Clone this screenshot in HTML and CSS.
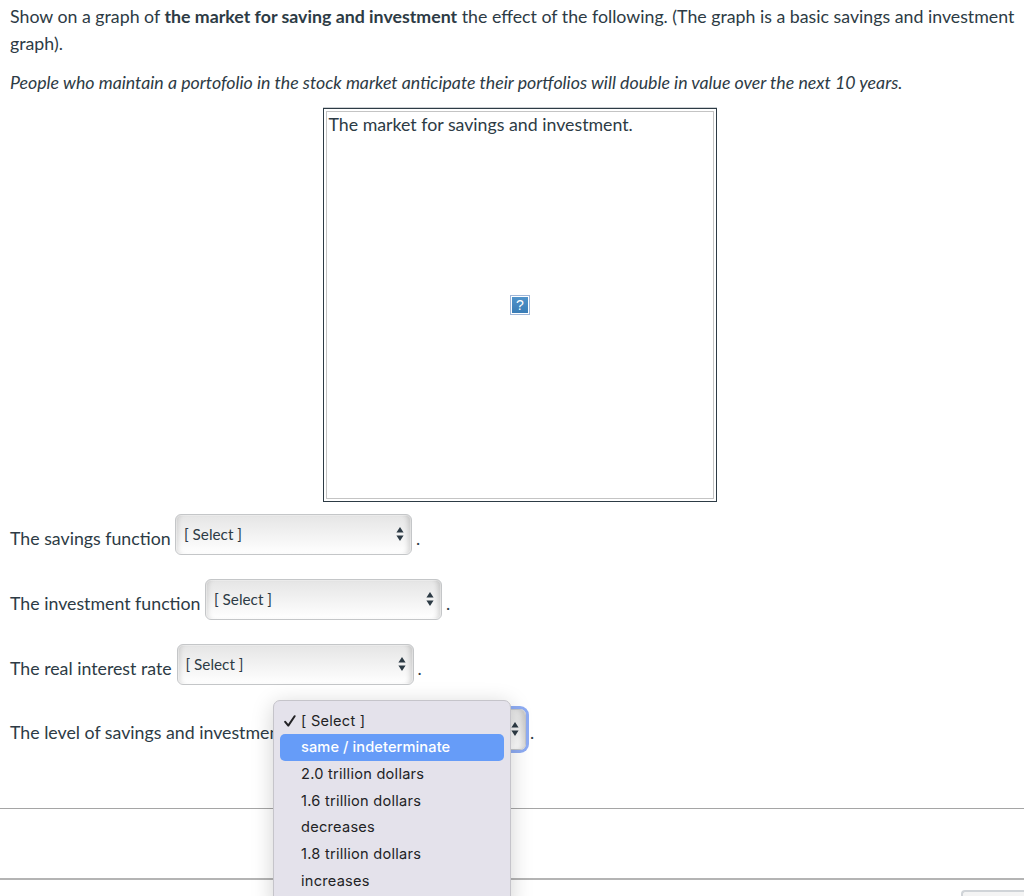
FILE: index.html
```html
<!DOCTYPE html>
<html lang="en">
<head>
	<meta charset="utf-8" />
	<title>Question</title>
	<link rel="stylesheet" href="styles.css">
</head>
<body>
	<div class="question">
		<p class="prompt">Show on a graph of <strong>the market for saving and investment</strong> the effect of the following. (The graph is a basic savings and investment<br/>graph).</p>
		<p class="scenario"><em>People who maintain a portofolio in the stock market anticipate their portfolios will double in value over the next 10 years.</em></p>

		<div class="graph">
			<div class="graph-cell">
				<span class="graph-title">The market for savings and investment.</span>
				<span class="missing">?</span>
			</div>
		</div>

		<div class="row">
			<span class="label savings">The savings function</span>
			<div class="select">[ Select ]<svg class="arrows" viewBox="0 0 8 14"><path d="M4 0L7.6 5.6H.4zM4 14L.4 8.4h7.2z"/></svg></div>
			<span class="label">.</span>
		</div>
		<div class="row">
			<span class="label investment">The investment function</span>
			<div class="select">[ Select ]<svg class="arrows" viewBox="0 0 8 14"><path d="M4 0L7.6 5.6H.4zM4 14L.4 8.4h7.2z"/></svg></div>
			<span class="label">.</span>
		</div>
		<div class="row">
			<span class="label rate">The real interest rate</span>
			<div class="select">[ Select ]<svg class="arrows" viewBox="0 0 8 14"><path d="M4 0L7.6 5.6H.4zM4 14L.4 8.4h7.2z"/></svg></div>
			<span class="label">.</span>
		</div>
		<div class="row">
			<span class="label level">The level of savings and investment</span>
			<div class="select focused"><svg class="arrows" viewBox="0 0 8 14"><path d="M4 0L7.6 5.6H.4zM4 14L.4 8.4h7.2z"/></svg>
				<ul class="menu">
					<li><svg class="check" viewBox="0 0 12 12"><path d="M1.2 6.8L4.3 10.6L10.6 1.2"/></svg>[ Select ]</li>
					<li class="active">same / indeterminate</li>
					<li>2.0 trillion dollars</li>
					<li>1.6 trillion dollars</li>
					<li>decreases</li>
					<li>1.8 trillion dollars</li>
					<li>increases</li>
				</ul>
			</div>
			<span class="label">.</span>
		</div>
	</div>

	<div class="divider"></div>
	<div class="footer">
		<div class="next"></div>
	</div>
</body>
</html>
```
FILE: styles.css
```css
*
{
	box-sizing: border-box;
}

body
{
	margin: 0;
	height: 896px;
	overflow: hidden;
	background-color: white;
	color: #2d3b45;
	font-family: Lato, sans-serif;
	font-size: 17.75px;
	line-height: 26.6px;
}

.question
{
	height: 808px;
	padding: 3px 10px 0;
}

.prompt
{
	margin: 0 0 13px;
	white-space: nowrap;
}

.scenario
{
	margin: 0 0 12px;
	white-space: nowrap;
}

.graph
{
	width: 394px;
	height: 394px;
	margin: 0 0 12.4px 313px;
	padding: 2px;
	border: 1px solid #2d3b45;
	box-shadow: 0 -0.5px 0 #9da3a8;
}

.graph-cell
{
	display: flex;
	flex-direction: column;
	align-items: center;
	height: 100%;
	border: 1px solid #c4c4c4;
}

.graph-title
{
	align-self: flex-start;
	margin-top: -1px;
	padding-left: 1.5px;
}

.missing
{
	width: 20px;
	height: 20px;
	margin-top: 158px;
	border: 1px solid #9fb6d8;
	outline: 1px solid white;
	outline-offset: -2px;
	background: linear-gradient(#5295cb, #397bb5);
	color: white;
	font: 14px/18px "Liberation Sans", sans-serif;
	text-align: center;
}

.row
{
	display: flex;
	align-items: flex-start;
	height: 64.9px;
}

.label
{
	padding-top: 10.6px;
	white-space: nowrap;
}

.savings
{
	width: 165px;
}

.investment
{
	width: 195px;
}

.rate
{
	width: 166.5px;
}

.level
{
	width: 282px;
}

.select
{
	position: relative;
	display: flex;
	flex-shrink: 0;
	justify-content: space-between;
	align-items: center;
	width: 237px;
	height: 41px;
	margin-right: 4px;
	padding: 0 8px 1px;
	border: 1px solid #c4c6c8;
	border-radius: 6px;
	background: linear-gradient(#e5e5e5, white);
	box-shadow: inset 0 0 0 1px rgba(255,255,255,0.35), inset 5px 0 5px -3px rgba(0,0,0,0.13), inset -6px 0 5px -3px rgba(0,0,0,0.15);
	font-size: 15.3px;
}

.arrows
{
	width: 8px;
	height: 14px;
	margin-left: auto;
	margin-right: -1px;
	fill: #2d3b45;
}

.focused
{
	width: 234px;
	margin-right: 4px;
	padding-right: 7px;
	box-shadow: 0 0 0 3px #8eacf3, inset -6px 0 5px -3px rgba(0,0,0,0.15);
}

.menu
{
	position: absolute;
	top: -10px;
	left: -20px;
	width: 238px;
	height: 210px;
	margin: 0;
	padding: 7px 6px;
	list-style: none;
	border: 1px solid #c5c4ca;
	border-radius: 7px;
	background-color: #e4e2eb;
	box-shadow: 0 4px 22px rgba(0,0,0,0.18);
	color: #222225;
	font-family: Inter, sans-serif;
	font-size: 14.6px;
	letter-spacing: 0.25px;
}

.menu li
{
	position: relative;
	height: 26.65px;
	padding-left: 21px;
	border-radius: 5px;
	white-space: nowrap;
}

.menu .active
{
	background-color: #669cf8;
	color: white;
	font-weight: 500;
	letter-spacing: 0.1px;
}

.check
{
	position: absolute;
	top: 7px;
	left: 4px;
	width: 12px;
	height: 12px;
	fill: none;
	stroke: #222225;
	stroke-width: 2;
	stroke-linecap: round;
	stroke-linejoin: round;
}

.divider
{
	height: 72px;
	border-top: 1px solid #a5a5a5;
	border-bottom: 2px solid #b4b4b4;
}

.footer
{
	display: flex;
	justify-content: flex-end;
	height: 16px;
	padding-top: 10px;
	overflow: hidden;
}

.next
{
	width: 63px;
	height: 40px;
	border: 2px solid #d0d4d8;
	border-right: none;
	border-radius: 4px 0 0 0;
	background-color: #f4f4f4;
}
```
